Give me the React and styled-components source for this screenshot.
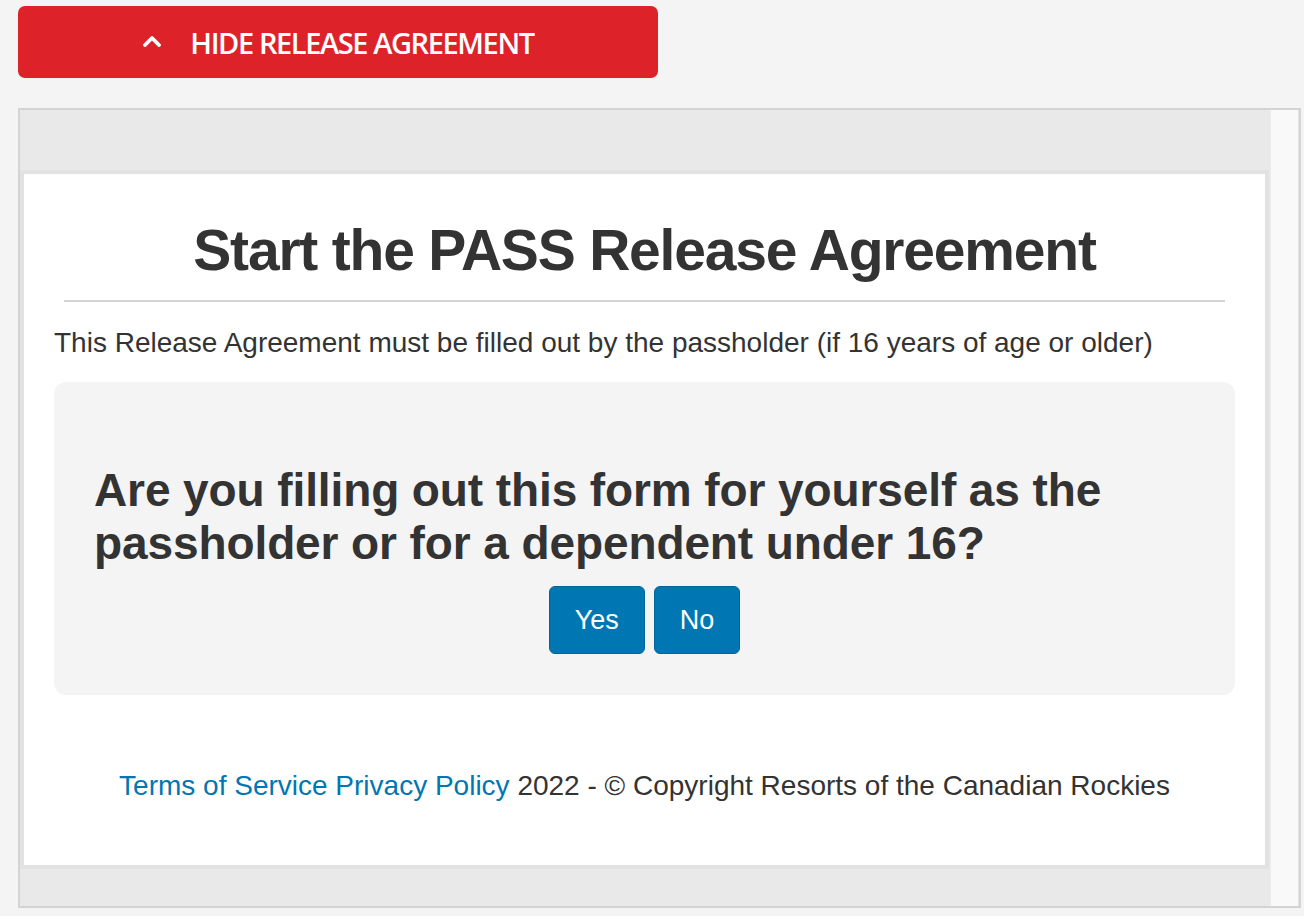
import styled, { createGlobalStyle } from "styled-components";

const GlobalStyle = createGlobalStyle`
  html, body {
    margin: 0;
    padding: 0;
    background: #f4f4f4;
  }
  body {
    font-family: "Liberation Sans", Arial, sans-serif;
    color: #333;
  }
`;

const App = () => {
  return (
    <>
      <GlobalStyle />
      <Page>
        <ToggleButton type="button">
          <Chevron viewBox="0 0 20 12" aria-hidden="true">
            <polyline points="3,10 10,3 17,10" />
          </Chevron>
          <span>HIDE RELEASE AGREEMENT</span>
        </ToggleButton>
        <Frame>
          <Viewport>
            <Card>
              <Heading>Start the PASS Release Agreement</Heading>
              <Rule />
              <Intro>
                This Release Agreement must be filled out by the passholder (if
                16 years of age or older)
              </Intro>
              <QuestionBox>
                <Question>
                  Are you filling out this form for yourself as the passholder
                  or for a dependent under 16?
                </Question>
                <Choices>
                  <Choice type="button">Yes</Choice>
                  <Choice type="button">No</Choice>
                </Choices>
              </QuestionBox>
              <Footer>
                <Link href="#">Terms of Service</Link>{" "}
                <Link href="#">Privacy Policy</Link> 2022 - © Copyright Resorts
                of the Canadian Rockies
              </Footer>
            </Card>
          </Viewport>
          <Scrollbar />
        </Frame>
      </Page>
    </>
  );
};

export default App;

const Page = styled.div`
  display: flex;
  flex-direction: column;
  align-items: flex-start;
  padding: 6px 0 0 18px;
`;

const ToggleButton = styled.button`
  width: 640px;
  height: 72px;
  display: flex;
  align-items: center;
  justify-content: center;
  gap: 28px;
  border: none;
  border-radius: 7px;
  background: #dd2329;
  color: #fff;
  font-family: "Open Sans", sans-serif;
  font-weight: 600;
  font-size: 29px;
  letter-spacing: -1.4px;
  cursor: pointer;
`;

const Chevron = styled.svg`
  width: 20px;
  height: 12px;
  margin-top: -3px;
  fill: none;
  stroke: #fff;
  stroke-width: 3.8;
  stroke-linecap: round;
  stroke-linejoin: round;
`;

const Frame = styled.div`
  margin-top: 30px;
  width: 1283px;
  height: 800px;
  box-sizing: border-box;
  border: 2px solid #d4d4d4;
  display: flex;
`;

const Viewport = styled.div`
  flex: 1;
  display: flex;
  flex-direction: column;
  background: #e9e9e9;
  padding: 60px 1px 37px 0;
`;

const Scrollbar = styled.div`
  width: 27px;
  background: #f9f9f9;
  border-left: 1px solid #ececec;
  border-right: 1px solid #e4e4e4;
`;

const Card = styled.div`
  flex: 1;
  background: #fff;
  border: 4px solid #e2e2e2;
  padding: 0 30px;
  display: flex;
  flex-direction: column;
`;

const Heading = styled.h1`
  margin: 45px 0 0;
  text-align: center;
  font-size: 57px;
  line-height: 1.1;
  font-weight: 700;
  letter-spacing: -1.2px;
  color: #333;
`;

const Rule = styled.hr`
  margin: 18px 10px 0;
  border: none;
  height: 2px;
  background: #d3d3d3;
`;

const Intro = styled.p`
  margin: 23px 0 0;
  font-size: 28px;
  line-height: 1.3;
  color: #333;
`;

const QuestionBox = styled.div`
  margin-top: 21px;
  background: #f4f4f4;
  border-radius: 12px;
  padding: 82px 40px 41px;
  display: flex;
  flex-direction: column;
  gap: 16px;
`;

const Question = styled.h2`
  margin: 0;
  font-size: 46px;
  line-height: 53px;
  font-weight: 700;
  letter-spacing: -0.1px;
  color: #333;
`;

const Choices = styled.div`
  display: flex;
  justify-content: center;
  gap: 9px;
`;

const Choice = styled.button`
  height: 68px;
  padding: 0 25px;
  border: 1px solid #00669a;
  border-radius: 6px;
  background: #0077b3;
  color: #fff;
  font-family: "Liberation Sans", Arial, sans-serif;
  font-size: 27px;
  cursor: pointer;
`;

const Footer = styled.p`
  margin: 73px 0 0;
  text-align: center;
  font-size: 28px;
  line-height: 1.3;
  color: #333;
`;

const Link = styled.a`
  color: #0077b3;
  text-decoration: none;
`;
